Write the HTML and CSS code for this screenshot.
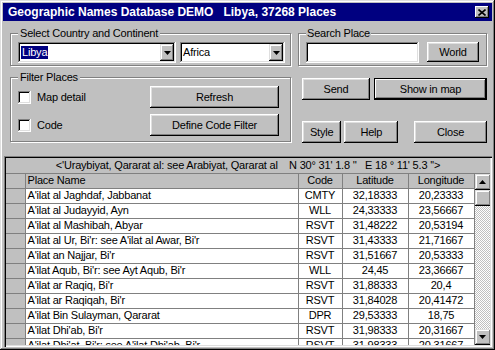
FILE: index.html
```html
<!DOCTYPE html>
<html lang="en">
<head>
  <meta charset="UTF-8" />
  <title>Geographic Names Database DEMO</title>
  <link rel="stylesheet" href="styles.css">
</head>
<body>
  <div class="window">
    <div class="titlebar">
      <span class="title">Geographic Names Database DEMO   Libya, 37268 Places</span>
      <button class="close-btn" aria-label="Close">
        <svg width="8" height="7" viewBox="0 0 8 7"><path d="M0.5 0.5L7.5 6.5M7.5 0.5L0.5 6.5" stroke="#000" stroke-width="1.6" fill="none"/></svg>
      </button>
    </div>

    <div class="top">
      <div class="col-left">
        <fieldset class="group group-country">
          <legend>Select Country and Continent</legend>
          <div class="combo-row">
            <div class="combo combo-country">
              <span class="combo-text"><span class="selected">Libya</span></span>
              <span class="drop"><svg width="7" height="4" viewBox="0 0 7 4"><path d="M0 0H7L3.5 4Z" fill="#000"/></svg></span>
            </div>
            <div class="combo combo-continent">
              <span class="combo-text">Africa</span>
              <span class="drop"><svg width="7" height="4" viewBox="0 0 7 4"><path d="M0 0H7L3.5 4Z" fill="#000"/></svg></span>
            </div>
          </div>
        </fieldset>

        <fieldset class="group group-filter">
          <legend>Filter Places</legend>
          <div class="filter-row">
            <label class="check"><span class="box"></span>Map detail</label>
            <button class="btn btn-filter">Refresh</button>
          </div>
          <div class="filter-row">
            <label class="check"><span class="box"></span>Code</label>
            <button class="btn btn-filter">Define Code Filter</button>
          </div>
        </fieldset>
      </div>

      <div class="col-right">
        <fieldset class="group group-search">
          <legend>Search Place</legend>
          <div class="search-row">
            <div class="field"></div>
            <button class="btn btn-world">World</button>
          </div>
        </fieldset>

        <div class="btn-row row-send">
          <button class="btn btn-send">Send</button>
          <button class="btn btn-default btn-map">Show in map</button>
        </div>
        <div class="btn-row row-tools">
          <button class="btn btn-style">Style</button>
          <button class="btn btn-help">Help</button>
          <button class="btn btn-close">Close</button>
        </div>
      </div>
    </div>

    <div class="grid">
      <div class="grid-caption">&lt;'Uraybiyat, Qararat al: see Arabiyat, Qararat al    N 30° 31' 1.8 ''   E 18 ° 11' 5.3 ''&gt;</div>
      <div class="grid-body">
        <table class="places">
          <colgroup>
            <col class="c-ind"><col class="c-name"><col class="c-code"><col class="c-lat"><col class="c-lon">
          </colgroup>
          <tr class="head">
            <td class="ind"></td><td>Place Name</td><td class="num">Code</td><td class="num">Latitude</td><td class="num">Longitude</td>
          </tr>
          <tr><td class="ind"></td><td>A'ilat al Jaghdaf, Jabbanat</td><td class="num">CMTY</td><td class="num">32,18333</td><td class="num">20,23333</td></tr>
          <tr><td class="ind"></td><td>A'ilat al Judayyid, Ayn</td><td class="num">WLL</td><td class="num">24,33333</td><td class="num">23,56667</td></tr>
          <tr><td class="ind"></td><td>A'ilat al Mashibah, Abyar</td><td class="num">RSVT</td><td class="num">31,48222</td><td class="num">20,53194</td></tr>
          <tr><td class="ind"></td><td>A'ilat al Ur, Bi'r: see A'ilat al Awar, Bi'r</td><td class="num">RSVT</td><td class="num">31,43333</td><td class="num">21,71667</td></tr>
          <tr><td class="ind"></td><td>A'ilat an Najjar, Bi'r</td><td class="num">RSVT</td><td class="num">31,51667</td><td class="num">20,53333</td></tr>
          <tr><td class="ind"></td><td>A'ilat Aqub, Bi'r: see Ayt Aqub, Bi'r</td><td class="num">WLL</td><td class="num">24,45</td><td class="num">23,36667</td></tr>
          <tr><td class="ind"></td><td>A'ilat ar Raqiq, Bi'r</td><td class="num">RSVT</td><td class="num">31,88333</td><td class="num">20,4</td></tr>
          <tr><td class="ind"></td><td>A'ilat ar Raqiqah, Bi'r</td><td class="num">RSVT</td><td class="num">31,84028</td><td class="num">20,41472</td></tr>
          <tr><td class="ind"></td><td>A'ilat Bin Sulayman, Qararat</td><td class="num">DPR</td><td class="num">29,53333</td><td class="num">18,75</td></tr>
          <tr><td class="ind"></td><td>A'ilat Dhi'ab, Bi'r</td><td class="num">RSVT</td><td class="num">31,98333</td><td class="num">20,31667</td></tr>
          <tr><td class="ind"></td><td>A'ilat Dhi'at, Bi'r: see A'ilat Dhi'ab, Bi'r</td><td class="num">RSVT</td><td class="num">31,98333</td><td class="num">20,31667</td></tr>
        </table>
        <div class="vscroll">
          <span class="sb-btn"><svg width="7" height="4" viewBox="0 0 7 4"><path d="M3.5 0L7 4H0Z" fill="#000"/></svg></span>
          <span class="sb-btn sb-thumb"></span>
          <span class="sb-track"></span>
          <span class="sb-btn"><svg width="7" height="4" viewBox="0 0 7 4"><path d="M0 0H7L3.5 4Z" fill="#000"/></svg></span>
        </div>
      </div>
    </div>
  </div>
</body>
</html>
```

FILE: styles.css
```css
* {
  box-sizing: border-box;
}

body {
  margin: 0;
  background: #c0c0c0;
  color: #000;
  font-family: 'Liberation Sans', Arial, sans-serif;
  font-size: 11px;
  letter-spacing: -0.2px;
}

.window {
  width: 495px;
  height: 350px;
  padding: 3px;
  background: #c0c0c0;
  display: flex;
  flex-direction: column;
  box-shadow: inset -1px -1px #000, inset 1px 1px #dfdfdf,
              inset -2px -2px #808080, inset 2px 2px #fff;
}

.titlebar {
  height: 18px;
  background: #000080;
  color: #fff;
  display: flex;
  align-items: center;
  padding: 0 3px 0 5px;
  font-size: 12px;
  font-weight: bold;
  letter-spacing: 0;
  white-space: pre;
}

.title {
  flex: 1;
}

.close-btn {
  width: 14px;
  height: 12px;
  padding: 0;
  border: none;
  background: #c0c0c0;
  display: flex;
  align-items: center;
  justify-content: center;
  box-shadow: inset -1px -1px #000, inset 1px 1px #fff,
              inset -2px -2px #808080;
}

/* ---- top part ---- */

.top {
  display: flex;
  padding: 6px 0 0 7px;
}

.col-left {
  width: 281px;
}

.col-right {
  width: 189px;
  margin-left: 7px;
}

.group {
  margin: 0;
  min-width: 0;
  border: 1px solid #808080;
  box-shadow: inset 1px 1px #fff, 1px 1px #fff;
}

.group legend {
  height: 13px;
  line-height: 13px;
  padding: 0 2px;
  background: #c0c0c0;
}

.group-country {
  padding: 2px 5px 2px 7px;
}

.group-search {
  padding: 2px 7px 2px 7px;
}

.group-search legend {
  padding: 0 1px;
}

.group-filter {
  margin-top: 5px;
  padding: 2px 11px 5px 7px;
}

.combo-row,
.search-row {
  display: flex;
  gap: 4px;
}

.search-row {
  gap: 8px;
}

.combo,
.field {
  height: 21px;
  background: #fff;
  display: flex;
  align-items: center;
  padding: 2px;
  box-shadow: inset -1px -1px #fff, inset 1px 1px #808080,
              inset -2px -2px #dfdfdf, inset 2px 2px #000;
}

.combo-country {
  width: 158px;
}

.combo-continent {
  width: 105px;
}

.combo-text {
  flex: 1;
  padding-left: 1px;
  line-height: 13px;
}

.selected {
  background: #000080;
  color: #fff;
  padding: 0 1px;
  display: inline-block;
  height: 13px;
}

.drop {
  width: 14px;
  height: 17px;
  background: #c0c0c0;
  display: flex;
  align-items: center;
  justify-content: center;
  box-shadow: inset -1px -1px #000, inset 1px 1px #dfdfdf,
              inset -2px -2px #808080, inset 2px 2px #fff;
}

.field {
  width: 113px;
}

/* ---- buttons ---- */

.btn {
  height: 22px;
  padding: 0;
  border: none;
  background: #c0c0c0;
  font: inherit;
  letter-spacing: inherit;
  color: #000;
  box-shadow: inset -1px -1px #000, inset 1px 1px #fff,
              inset -2px -2px #808080, inset 2px 2px #dfdfdf;
}

.btn-default {
  box-shadow: inset 0 0 0 1px #000, inset -2px -2px #000, inset 2px 2px #fff,
              inset -3px -3px #808080;
}

.btn-world {
  width: 52px;
  height: 20px;
}

.filter-row {
  display: flex;
  align-items: center;
  height: 22px;
}

.filter-row + .filter-row {
  margin-top: 6px;
}

.check {
  display: flex;
  align-items: center;
  gap: 6px;
}

.box {
  width: 13px;
  height: 13px;
  background: #fff;
  box-shadow: inset -1px -1px #fff, inset 1px 1px #808080,
              inset -2px -2px #dfdfdf, inset 2px 2px #000;
}

.btn-filter {
  margin-left: auto;
  width: 129px;
}

.btn-row {
  display: flex;
  padding-left: 4px;
}

.row-send {
  margin-top: 12px;
  gap: 4px;
}

.row-tools {
  margin-top: 21px;
}

.btn-send { width: 68px; }
.btn-map { width: 113px; }
.btn-style { width: 40px; }
.btn-help { width: 55px; margin-left: 3px; }
.btn-close { width: 74px; margin-left: 16px; }

/* ---- grid ---- */

.grid {
  flex: 1;
  margin: 13px 0 0 1px;
  padding: 2px;
  display: flex;
  flex-direction: column;
  overflow: hidden;
  box-shadow: inset 1px 1px #808080, inset 2px 2px #000,
              inset -1px -1px #fff, inset -2px -2px #dfdfdf;
}

.grid-caption {
  height: 16px;
  line-height: 14px;
  text-align: center;
  white-space: pre;
  border-bottom: 1px solid #808080;
}

.grid-body {
  flex: 1;
  display: flex;
  overflow: hidden;
}

.places {
  width: 468px;
  table-layout: fixed;
  border-collapse: collapse;
  background: #fff;
  align-self: flex-start;
}

.c-ind { width: 19px; }
.c-name { width: 273px; }
.c-code { width: 44px; }
.c-lat { width: 66px; }
.c-lon { width: 66px; }

.places td {
  height: 15px;
  padding: 0 2px;
  line-height: 13px;
  border: 1px solid #808080;
  white-space: nowrap;
  overflow: hidden;
}

.places tr:first-child td {
  border-top: none;
}

.places td:first-child {
  border-left: none;
}

.places .head td {
  height: 14px;
  background: #c0c0c0;
}

.places td.ind {
  background: #c0c0c0;
}

.places td.num {
  text-align: center;
}

.vscroll {
  width: 16px;
  display: flex;
  flex-direction: column;
}

.sb-btn {
  width: 16px;
  height: 16px;
  flex: none;
  background: #c0c0c0;
  display: flex;
  align-items: center;
  justify-content: center;
  box-shadow: inset -1px -1px #000, inset 1px 1px #dfdfdf,
              inset -2px -2px #808080, inset 2px 2px #fff;
}

.sb-track {
  flex: 1;
  background: repeating-conic-gradient(#c0c0c0 0 25%, #fff 0 50%) 0 0 / 2px 2px;
}
```
